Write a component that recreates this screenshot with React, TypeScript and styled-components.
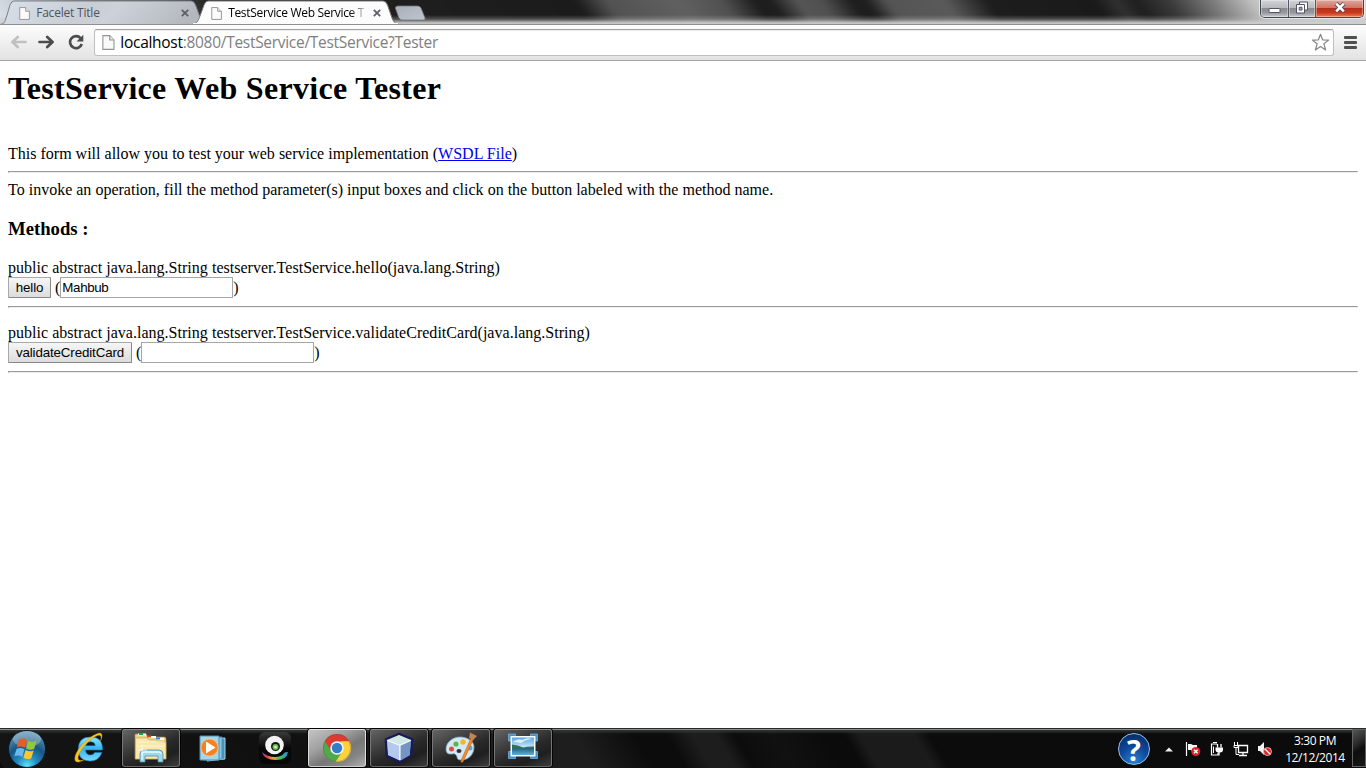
import React from "react";
import styled, { createGlobalStyle } from "styled-components";

const GlobalStyle = createGlobalStyle`
  * { box-sizing: border-box; }
  html, body { margin: 0; background: #fff; }
  body { width: 1366px; height: 768px; overflow: hidden; }
  svg { display: block; flex: none; }
`;

const uiFont = `"Open Sans", "Noto Sans", sans-serif`;

const Screen = styled.div`
  width: 1366px;
  height: 768px;
  display: flex;
  flex-direction: column;
  overflow: hidden;
`;

/* ---------- window frame ---------- */

const TitleBar = styled.header`
  position: relative;
  display: flex;
  align-items: flex-start;
  height: 24px;
  flex: none;
  overflow: hidden;
  background: #1c1c1c;
`;

const Glass = styled.div`
  position: absolute;
  inset: -20px -40px -20px -36px;
  transform: skewX(36deg);
  transform-origin: top left;
  filter: blur(3px);
  background: linear-gradient(
    90deg,
    #dfe7ef 0, #c3c9d0 40px, #777 100px, #555 180px, #222 230px,
    #1b1b1b 596px, #525252 628px, #606060 700px, #505050 742px, #1d1d1d 776px, #1f1f1f 792px,
    #555 818px, #505050 842px, #1e1e1e 872px, #1e1e1e 886px, #545454 908px, #5a5a5a 964px,
    #1d1d1d 1008px, #1a1a1a 1115px, #303030 1136px, #1f1f1f 1156px, #3a3a3a 1190px,
    #777 1230px, #c4c4c4 1275px, #dadada 1386px
  );
`;

const GlassEdge = styled.div`
  position: absolute;
  inset: 15px 0 0 0;
  background: linear-gradient(180deg, transparent 0, rgba(190, 190, 190, 0.3) 45%, rgba(205, 205, 205, 0.95) 88%);
`;

const TabStrip = styled.div`
  position: relative;
  width: 430px;
  height: 24px;
  flex: none;
`;

const TabShapes = styled.svg`
  position: absolute;
  left: 0;
  top: 0;
`;

const TabRow = styled.div`
  position: relative;
  display: flex;
  height: 24px;
  padding: 2px 0 0 19px;
`;

const Tab = styled.div<{ $active?: boolean }>`
  display: flex;
  align-items: center;
  width: ${(p) => (p.$active ? 173 : 192)}px;
  height: 22px;
  font: 12px/22px ${uiFont};
  color: ${(p) => (p.$active ? "#000" : "#50545a")};
`;

const TabTitle = styled.span<{ $spacing: number; $fade?: boolean }>`
  width: 137px;
  margin: 0 8px 0 6px;
  white-space: nowrap;
  letter-spacing: ${(p) => p.$spacing}px;
  ${(p) => p.$fade && "mask-image: linear-gradient(90deg, #000 122px, transparent 140px);"}
`;

const WindowButtons = styled.div`
  position: relative;
  display: flex;
  width: 104px;
  height: 18px;
  margin-left: auto;
  margin-right: 2px;
  border: 1px solid #41454c;
  border-top: 0;
  border-radius: 0 0 5px 5px;
  overflow: hidden;
  box-shadow: 0 0 0 1px rgba(255, 255, 255, 0.55);
`;

const WindowButton = styled.div<{ $width: number; $close?: boolean }>`
  display: flex;
  align-items: center;
  justify-content: center;
  width: ${(p) => p.$width}px;
  height: 17px;
  padding-bottom: 2px;
  border-right: ${(p) => (p.$close ? 0 : 1)}px solid #555962;
  box-shadow: inset 0 0 0 1px rgba(255, 255, 255, 0.35);
  background: ${(p) =>
    p.$close
      ? "linear-gradient(#dfa89e 0, #cf7566 45%, #b8301a 50%, #c93a1d 75%, #e98059 100%)"
      : "linear-gradient(#d3d4d6 0, #b9babd 45%, #898b90 50%, #97999e 75%, #cbccd0 100%)"};
`;

/* ---------- browser toolbar ---------- */

const Toolbar = styled.div`
  display: flex;
  align-items: center;
  height: 37px;
  flex: none;
  padding: 0 7px 0 9px;
  border-top: 1px solid #8e8e8e;
  border-bottom: 1px solid #a3a3a3;
  background: linear-gradient(#fdfdfd, #e2e2e2);
`;

const NavIcons = styled.div`
  display: flex;
  gap: 11px;
  width: 85px;
  padding-bottom: 1px;
`;

const AddressBar = styled.div`
  display: flex;
  align-items: center;
  width: 1240px;
  height: 27px;
  padding: 0 3px 0 7px;
  border: 1px solid #c0c0c0;
  border-top-color: #a0a0a0;
  border-radius: 3px;
  background: #fff;
  box-shadow: inset 0 1px 1px rgba(0, 0, 0, 0.08);
`;

const Url = styled.span`
  flex: 1;
  margin: -1px 0 0 5.5px;
  font: 15.5px/24px ${uiFont};
  letter-spacing: -0.29px;
  color: #808080;
  b { font-weight: 400; color: #000; }
`;

const MenuIcon = styled.div`
  display: flex;
  flex-direction: column;
  gap: 2px;
  margin-left: 10px;
  i { width: 13px; height: 3px; border-radius: 1px; background: #505050; }
`;

/* ---------- page ---------- */

const Page = styled.main`
  flex: 1;
  padding: 10px 8px 0;
  background: #fff;
  color: #000;
  font: 16px/18px "Liberation Serif", serif;
`;

const Heading = styled.h1`
  height: 74px;
  margin: 0;
  font-size: 32px;
  line-height: 34px;
  letter-spacing: 0.31px;
`;

const Line = styled.p`
  margin: 0;
  height: 18px;
  white-space: nowrap;
  letter-spacing: 0.006px;
  a { color: #0000ee; text-decoration: underline; }
`;

const Signature = styled(Line)`
  letter-spacing: 0.026px;
`;

const SubHeading = styled.h3`
  margin: 19px 0 20px;
  font-size: 18.72px;
  line-height: 21px;
`;

const Rule = styled.hr`
  height: 2px;
  margin: 8px 0;
  border: 1px solid;
  border-color: #9a9a9a #eee #eee #9a9a9a;
`;

const MethodRow = styled.div`
  display: flex;
  align-items: center;
  height: 21px;
  white-space: pre;
`;

const MethodButton = styled.button<{ $width: number }>`
  width: ${(p) => p.$width}px;
  height: 21px;
  margin: 0 4px 0 0;
  padding: 0;
  border: 1px solid #a9a9a9;
  border-right-color: #888;
  border-bottom-color: #888;
  border-radius: 1px;
  background: linear-gradient(#f6f6f6, #dcdcdc);
  color: #000;
  font: 13.33px/18px "Liberation Sans", sans-serif;
  letter-spacing: -0.12px;
`;

const MethodInput = styled.input`
  width: 173px;
  height: 21px;
  margin: 0;
  padding: 1px;
  border: 1px solid #a6a6a6;
  background: #fff;
  color: #000;
  font: 13.33px "Liberation Sans", sans-serif;
  letter-spacing: -0.35px;
`;

const Method = styled.section`
  & + & { margin-top: 16px; }
`;

/* ---------- taskbar ---------- */

const Taskbar = styled.footer`
  position: relative;
  display: flex;
  height: 40px;
  flex: none;
  overflow: hidden;
  background: #0c0c0c;
`;

const TaskbarSheen = styled.div`
  position: absolute;
  inset: 0 0 0 -20px;
  transform: skewX(31deg);
  transform-origin: top left;
  background: linear-gradient(
    90deg,
    #141414 0, #101010 300px, #1d1d1d 480px, #1e1e1e 590px, #0c0c0c 650px, #0c0c0c 682px,
    #1d1d1d 708px, #1d1d1d 732px, #0c0c0c 750px, #111 790px, #0b0b0b 840px, #0b0b0b 860px,
    #1b1b1b 875px, #1b1b1b 930px, #0c0c0c 945px, #0b0b0b 1386px
  );
`;

const TaskbarEdge = styled.div`
  position: absolute;
  inset: 0;
  border-top: 1px solid #252a2a;
  background: linear-gradient(#8b8d8d 0, #8b8d8d 1px, #353737 1px, rgba(30, 32, 32, 0) 5px);
`;

const TaskItems = styled.div`
  position: relative;
  display: flex;
  gap: 4px;
`;

const StartButton = styled.div`
  display: flex;
  align-items: center;
  justify-content: center;
  width: 56px;
  height: 40px;
  padding: 0 3px 1px 0;
`;

const TaskButton = styled.div<{ $state?: "open" | "active" }>`
  display: flex;
  align-items: center;
  justify-content: center;
  width: 58px;
  height: 38px;
  margin-top: 1px;
  border: 1px solid transparent;
  border-radius: 3px;
  ${(p) =>
    p.$state === "open" &&
    `border-color: #8a8a8a #777 #666; box-shadow: 0 0 0 1px #050505;
     background: linear-gradient(155deg, #646464 0, #454545 28%, #292929 55%, #1f1f1f 75%, #3e3e3e 100%);`}
  ${(p) =>
    p.$state === "active" &&
    `border-color: #e6e6e6 #ddd #ccc; box-shadow: 0 0 0 1px #050505;
     background: linear-gradient(150deg, #c4c4c4 0, #a0a0a0 35%, #777 58%, #858585 78%, #b0b0b0 100%);`}
`;

const Tray = styled.div`
  position: relative;
  display: flex;
  align-items: center;
  margin-left: auto;
  padding-top: 2px;
`;

const TrayArrow = styled.svg`
  margin: 0 12px 0 15px;
`;

const TrayIcons = styled.div`
  display: flex;
  align-items: center;
  gap: 8px;
`;

const Clock = styled.div`
  width: 62px;
  margin-left: 10px;
  text-align: center;
  white-space: nowrap;
  color: #fff;
  font: 12px/17px ${uiFont};
  letter-spacing: -0.4px;
`;

const ShowDesktop = styled.div`
  position: relative;
  width: 14px;
  height: 38px;
  margin: 1px 0 0 6px;
  border: 1px solid #636363;
  background: linear-gradient(145deg, #555 0, #2d2d2d 35%, #0d0d0d 55%, #181818 100%);
`;

/* ---------- drawings ---------- */

const PageIcon = ({ size = 14 }: { size?: number }) => (
  <svg width={(size * 12) / 14} height={size} viewBox="0 0 12 14">
    <path d="M.8.6h6.4l4 4v8.8H.8z" fill="#fafafa" stroke="#939393" />
    <path d="M7.2.6v4h4" fill="#e8e8e8" stroke="#939393" />
  </svg>
);

const CloseIcon = () => (
  <svg width="8" height="8" viewBox="0 0 8 8">
    <path d="M.8.8l6.4 6.4M7.2.8L.8 7.2" stroke="#5d5f63" strokeWidth="1.8" />
  </svg>
);

const Tabs = () => (
  <TabShapes width="430" height="24" viewBox="0 0 430 24">
    <defs>
      <linearGradient id="idle" x2="1" y2=".12">
        <stop offset="0" stopColor="#d9e0e8" />
        <stop offset=".45" stopColor="#c9ced6" />
        <stop offset=".6" stopColor="#cdd2da" />
        <stop offset="1" stopColor="#b4b8be" />
      </linearGradient>
      <linearGradient id="newTab" x2="1" y2="1">
        <stop offset="0" stopColor="#a8afb9" />
        <stop offset="1" stopColor="#bfc5ce" />
      </linearGradient>
    </defs>
    <path d="M0 24.500C5 24 5 21 7 15L10 5Q11.500 1 14 1H191Q194 1 195.500 5L201 20Q202 24 205 24.500Z" fill="url(#idle)" stroke="#7c8087" />
    <path d="M192 24.500C197 24 198 21 200 16L204 5Q205.500 1 208 1H383Q386 1 387.500 5L392 18Q394 24 399 24.500Z" fill="#fcfcfc" stroke="#777" />
    <path d="M193 24h205" stroke="#fcfcfc" strokeWidth="2" />
    <path d="M395.500 8.500Q395 6 398 6H417.500Q420 6 421 8L425 18Q425.500 20 423 20H402.500Q400 20 399 18Z" fill="url(#newTab)" stroke="#74777c" strokeWidth=".8" />
  </TabShapes>
);

const ArrowIcon = ({ forward }: { forward?: boolean }) => (
  <svg width="18" height="16" viewBox="0 0 18 16">
    <path
      d={forward ? "M1.500 8h13M9.200 3L14.600 8l-5.400 5" : "M16.500 8h-13M8.800 3L3.400 8l5.400 5"}
      fill="none"
      stroke={forward ? "#4c4c4c" : "#c0c0c0"}
      strokeWidth="2.7"
      strokeLinecap="round"
      strokeLinejoin="round"
    />
  </svg>
);

const ReloadIcon = () => (
  <svg width="18" height="16" viewBox="0 0 18 16">
    <path d="M13.600 4.200A6 6 0 1 0 14.800 10" fill="none" stroke="#4c4c4c" strokeWidth="2.600" />
    <path d="M16.300.800v6.700H9.600z" fill="#4c4c4c" />
  </svg>
);

const StarIcon = () => (
  <svg width="19" height="19" viewBox="0 0 19 19">
    <path d="M9.500 1.200l2.100 5.600 6 .3-4.700 3.700 1.700 6.200-5.100-3.500-5.100 3.500 1.700-6.200L1.400 7.100l6-.3z" fill="#fff" stroke="#858585" strokeWidth="1.200" strokeLinejoin="round" />
  </svg>
);

const StartIcon = () => (
  <svg width="40" height="40" viewBox="0 0 40 40">
    <defs>
      <radialGradient id="orb" cx=".5" cy=".95" r=".95">
        <stop offset="0" stopColor="#5fe4fb" />
        <stop offset=".28" stopColor="#238dc2" />
        <stop offset=".58" stopColor="#185584" />
        <stop offset="1" stopColor="#6d9db8" />
      </radialGradient>
    </defs>
    <circle cx="20" cy="21" r="18.500" fill="url(#orb)" stroke="#071a2b" />
    <ellipse cx="20" cy="11" rx="14" ry="8" fill="#d5e7ee" opacity=".32" />
    <path d="M12.200 11.500q4.500-2.200 7.800.500l-2.200 7.800q-3.700-2.500-7.900-.4z" fill="#ee5a24" />
    <path d="M21.200 12.800q3.800 2.200 8.400 0l-2.400 8q-4.100 1.900-8.100-.4z" fill="#93c83e" />
    <path d="M9.500 20.900q4.100-1.900 7.900.4l-2.200 7.700q-3.700-2.600-7.900-.4z" fill="#6fb6ea" />
    <path d="M18.600 22.100q3.900 2.200 8 .3L24.300 30.200q-4 2-7.900-.4z" fill="#fbc72e" />
  </svg>
);

const ExplorerEIcon = () => (
  <svg width="32" height="34" viewBox="0 0 32 34">
    <defs>
      <linearGradient id="ieBlue" x2="0" y2="1">
        <stop offset="0" stopColor="#8ee5ff" />
        <stop offset=".5" stopColor="#36b3ee" />
        <stop offset="1" stopColor="#79dafc" />
      </linearGradient>
    </defs>
    <path d="M29.500 19H12.500q.3 5 5 5 3 0 4.200-2.500h7.200Q26 30 17.300 30 5.300 30 5.300 18.300 5.300 6 17.500 6q12.500 0 12 13zM12.700 14.700h9.600q-.4-4-4.700-4-4.200 0-4.900 4z" fill="url(#ieBlue)" stroke="#167fbd" strokeWidth=".6" />
    <path d="M27.500 10c3-6 1.500-9.500-3.500-7.300C15 6 3.500 18 2 26c-1.200 6.300 4 6.300 9.500 2.600-4.700 1.800-7.500.7-6-4C8 17 18 6.800 24.500 4.600c3.700-1.200 4.200 1.400 3 5.400z" fill="#fbc624" stroke="#c98b0e" strokeWidth=".4" />
  </svg>
);

const FolderIcon = () => (
  <svg width="34" height="32" viewBox="0 0 34 32">
    <path d="M1 3q0-1 1-1h10l2 3h16q2 0 2 2v20H1z" fill="#e9d18a" stroke="#b69543" strokeWidth=".6" />
    <path d="M4 2.500h8M14 5h8M22 7h8" stroke="#fff" strokeWidth="2" />
    <path d="M5 2h4" stroke="#18a64b" strokeWidth="2" />
    <path d="M13 4.500h4" stroke="#d3482a" strokeWidth="2" />
    <path d="M22 6.500h4" stroke="#288ad7" strokeWidth="2" />
    <path d="M1.500 6h11l3 2h6l2 2H32v17H1.500z" fill="#fae7aa" stroke="#c4a654" strokeWidth=".6" />
    <path d="M4 10h26M3 14h28" stroke="#fff5ce" />
    <path d="M6 30v-8q0-4 4-4h15q4 0 4 4v8h-5v-6H11v6z" fill="#9ed9ec" stroke="#528da9" strokeWidth=".8" />
    <path d="M8 28v-6q0-2 3-2h13q3 0 3 2" fill="none" stroke="#e4fbff" strokeWidth="1.300" />
    <path d="M8 13v10M4 18h9" stroke="#fff" strokeWidth=".8" />
  </svg>
);

const MediaIcon = () => (
  <svg width="28" height="28" viewBox="0 0 28 28">
    <path d="M8 5l18-1v21L8 27z" fill="#4b91b5" stroke="#a3d8ed" />
    <path d="M4 4l19-1v22L4 26z" fill="#8ac6df" stroke="#4f91b2" />
    <path d="M1 2h19v24H1z" fill="#a7d6e9" stroke="#4b91b5" />
    <circle cx="10.500" cy="13.500" r="8.600" fill="#f58220" stroke="#ffc28d" strokeWidth=".8" />
    <path d="M7 7.500l9.500 6-9.500 6z" fill="#fff" />
  </svg>
);

const WebcamIcon = () => (
  <svg width="34" height="34" viewBox="0 0 34 34">
    <defs>
      <linearGradient id="spectrum">
        <stop offset="0" stopColor="#7a42d8" />
        <stop offset=".2" stopColor="#e34034" />
        <stop offset=".42" stopColor="#f8a136" />
        <stop offset=".65" stopColor="#44c252" />
        <stop offset="1" stopColor="#278de0" />
      </linearGradient>
      <linearGradient id="camBox" x2="0" y2="1">
        <stop offset="0" stopColor="#393939" />
        <stop offset=".5" stopColor="#070707" />
      </linearGradient>
    </defs>
    <rect x="1" y="1" width="32" height="32" rx="6" fill="url(#camBox)" />
    <path d="M4 21q7 6 15 4 6-4 11-4-1 8-12 8Q6 29 4 21z" fill="url(#spectrum)" />
    <ellipse cx="17" cy="20" rx="10" ry="6" fill="#050505" />
    <circle cx="16.500" cy="14" r="9.300" fill="#f2f2f2" />
    <circle cx="17.500" cy="15.500" r="4.500" fill="#151515" />
    <circle cx="17.500" cy="16" r="3" fill="#68bd46" />
    <circle cx="17.500" cy="16" r="1.300" fill="#d9ffd0" />
  </svg>
);

const ChromeIcon = () => (
  <svg width="30" height="30" viewBox="0 0 30 30">
    <circle cx="15" cy="15" r="14" fill="#4eaa4b" />
    <path d="M2.900 8A14 14 0 0 1 27.300 8.300H15l-6 9.500z" fill="#df3a31" />
    <path d="M27.300 8.300A14 14 0 0 1 13.500 29l7.500-11.500L18.500 8.300z" fill="#fed13d" />
    <circle cx="15" cy="15" r="6.800" fill="#f5f5f5" />
    <circle cx="15" cy="15" r="5.200" fill="#337ecb" />
    <circle cx="15" cy="15" r="13.600" fill="none" stroke="#6b5030" strokeOpacity=".45" strokeWidth=".7" />
  </svg>
);

const CubeIcon = () => (
  <svg width="34" height="34" viewBox="0 0 34 34">
    <path d="M17 3L30 8.500l-1 16L18 31 5 25 4 8.500z" fill="#b9cbe7" stroke="#171c58" strokeWidth="2.600" strokeLinejoin="round" />
    <path d="M5 9l12-5 12 5-11 5z" fill="#d3e7e3" />
    <path d="M5 9.500l12.500 5L18 29.500 6 24z" fill="#b5c9ec" />
    <path d="M18.500 14.500L29 9.500l-1.300 14.800-9.200 5.200z" fill="#7494c3" />
    <path d="M5 9.300l12.800 5L29 9.300M17.800 14.300V29" fill="none" stroke="#f5f9ff" strokeWidth="1.200" />
  </svg>
);

const PaintIcon = () => (
  <svg width="36" height="34" viewBox="0 0 36 34">
    <path d="M17 6C9 6 3 12 3 18q0 5 4 5c4 0 4-1 6 1s0 5 5 5c8 0 13-6 13-13C31 10 24 6 17 6z" fill="#d6e8f4" stroke="#7eabc9" strokeWidth=".8" />
    <ellipse cx="16" cy="20" rx="2.500" ry="2" fill="#27313a" />
    <circle cx="8.500" cy="18" r="2.500" fill="#df4c3e" />
    <circle cx="13" cy="13" r="2.600" fill="#55b848" />
    <circle cx="20" cy="11" r="2.700" fill="#f5b62f" />
    <circle cx="27" cy="17" r="2.500" fill="#56a9e3" />
    <path d="M28 7l2.500 1L20 31l-2 .5.200-2.500z" fill="#f18b27" stroke="#b05a14" strokeWidth=".5" />
    <path d="M27 1.500L34 5l-4 4-4-2z" fill="#bd8655" />
  </svg>
);

const PhotoIcon = () => (
  <svg width="32" height="32" viewBox="0 0 32 32">
    <defs>
      <linearGradient id="sky" x2="0" y2="1">
        <stop offset="0" stopColor="#5ba5e2" />
        <stop offset="1" stopColor="#d8f0fb" />
      </linearGradient>
      <linearGradient id="lake" x2="0" y2="1">
        <stop offset="0" stopColor="#21628a" />
        <stop offset="1" stopColor="#63b0d6" />
      </linearGradient>
    </defs>
    <path d="M1.500 2h7v7h-7zM23.500 2h7v7h-7zM1.500 19.500h7v7h-7zM23.500 19.500h7v7h-7z" fill="#438fc9" stroke="#7ebae5" strokeWidth=".7" />
    <path d="M3.500 4h25v20.500h-25z" fill="#f5fbff" />
    <path d="M5 5.500h22v11H5z" fill="url(#sky)" />
    <path d="M6 10q5-4 9-2 5-3 10-1-8 1-11 4-4-1-8-1z" fill="#f3fbff" opacity=".8" />
    <path d="M5 12.500q6 .5 11 3 6-1.500 11-1v3H5z" fill="#2f7258" />
    <path d="M5 16.500h22V23H5z" fill="url(#lake)" />
  </svg>
);

const HelpBadge = styled.div`
  display: flex;
  align-items: center;
  justify-content: center;
  width: 32px;
  height: 32px;
  border: 1px solid #8ec4ed;
  border-radius: 50%;
  background: radial-gradient(circle at 50% 90%, #2882d4 0, #10499b 45%, #06245f 100%);
  color: #fff;
  font: 700 29px/29px ${uiFont};
`;

const FlagIcon = () => (
  <svg width="16" height="16" viewBox="0 0 16 16">
    <path d="M1.500 1v14" stroke="#fff" strokeWidth="1.200" />
    <path d="M3 3h3l2 1h4v6H7L6 9H3z" fill="#f5f5f5" />
    <circle cx="10.800" cy="10.500" r="4.500" fill="#d8252c" />
    <path d="M9 8.700l3.600 3.600M12.600 8.700L9 12.300" stroke="#fff" strokeWidth="1.400" />
  </svg>
);

const PowerIcon = () => (
  <svg width="16" height="16" viewBox="0 0 16 16">
    <path d="M4 1.500h4M8 3H2.500v11H9v-2" fill="none" stroke="#fff" strokeWidth="1.200" />
    <path d="M4.500 5.500v6.500" stroke="#fff" />
    <path d="M6.500 6.500h7.500v2q0 3-3 3H9.500q-3 0-3-3z" fill="#fff" />
    <path d="M8.500 6.500V3M12 6.500V3M10 11v3.500" stroke="#fff" strokeWidth="1.300" />
  </svg>
);

const NetworkIcon = () => (
  <svg width="16" height="16" viewBox="0 0 16 16">
    <path d="M5.500 4.500h9v7h-9zM10 12v2M6 14.500h8" fill="none" stroke="#fff" strokeWidth="1.300" />
    <path d="M1.500 1v3M4.500 1v3M1 4.500h4v2H1zM3 6v7.500h3" fill="none" stroke="#fff" />
  </svg>
);

const MutedIcon = () => (
  <svg width="17" height="16" viewBox="0 0 17 16">
    <path d="M1 5h2l4-4v13l-4-4H1z" fill="#f3f3f3" />
    <circle cx="10.500" cy="10.500" r="4" fill="#d8252c" stroke="#f6b3b3" strokeWidth=".9" />
    <path d="M8 8l5 5" stroke="#fff" strokeWidth="1.300" />
  </svg>
);

/* ---------- app ---------- */

export default function App() {
  return (
    <Screen>
      <GlobalStyle />
      <TitleBar>
        <Glass />
        <GlassEdge />
        <TabStrip>
          <Tabs />
          <TabRow>
            <Tab>
              <PageIcon size={13} />
              <TabTitle $spacing={-0.2}>Facelet Title</TabTitle>
              <CloseIcon />
            </Tab>
            <Tab $active>
              <PageIcon size={13} />
              <TabTitle $spacing={-0.32} $fade>TestService Web Service T</TabTitle>
              <CloseIcon />
            </Tab>
          </TabRow>
        </TabStrip>
        <WindowButtons>
          <WindowButton $width={28}>
            <svg width="13" height="14"><rect x="1" y="7.500" width="11" height="4" rx=".5" fill="#fff" stroke="#50536a" /></svg>
          </WindowButton>
          <WindowButton $width={27}>
            <svg width="12" height="13" viewBox="0 0 12 13">
              <path d="M3.500 1h8v8h-8z" fill="#fff" stroke="#50536a" />
              <path d="M.5 3.500h8v8.500h-8z" fill="#fff" stroke="#50536a" />
              <path d="M3.200 6.300h2.800v2.800H3.200z" fill="#aaa" stroke="#50536a" />
            </svg>
          </WindowButton>
          <WindowButton $width={47} $close>
            <svg width="12" height="11" viewBox="0 0 12 11">
              <path d="M2 1.500l8 8M10 1.500l-8 8" stroke="#50475c" strokeWidth="4.200" />
              <path d="M2.200 1.700l7.600 7.600M9.800 1.700L2.200 9.300" stroke="#fff" strokeWidth="2.600" />
            </svg>
          </WindowButton>
        </WindowButtons>
      </TitleBar>

      <Toolbar>
        <NavIcons>
          <ArrowIcon />
          <ArrowIcon forward />
          <ReloadIcon />
        </NavIcons>
        <AddressBar>
          <PageIcon size={15} />
          <Url><b>localhost</b>:8080/TestService/TestService?Tester</Url>
          <StarIcon />
        </AddressBar>
        <MenuIcon><i /><i /><i /></MenuIcon>
      </Toolbar>

      <Page>
        <Heading>TestService Web Service Tester</Heading>
        <Line>This form will allow you to test your web service implementation (<a>WSDL File</a>)</Line>
        <Rule />
        <Line>To invoke an operation, fill the method parameter(s) input boxes and click on the button labeled with the method name.</Line>
        <SubHeading>Methods :</SubHeading>
        <Method>
          <Signature>public abstract java.lang.String testserver.TestService.hello(java.lang.String)</Signature>
          <MethodRow>
            <MethodButton $width={43}>hello</MethodButton>(<MethodInput defaultValue="Mahbub" />)
          </MethodRow>
          <Rule />
        </Method>
        <Method>
          <Signature>public abstract java.lang.String testserver.TestService.validateCreditCard(java.lang.String)</Signature>
          <MethodRow>
            <MethodButton $width={124}>validateCreditCard</MethodButton>(<MethodInput />)
          </MethodRow>
          <Rule />
        </Method>
      </Page>

      <Taskbar>
        <TaskbarSheen />
        <TaskbarEdge />
        <TaskItems>
          <StartButton><StartIcon /></StartButton>
          <TaskButton><ExplorerEIcon /></TaskButton>
          <TaskButton $state="open"><FolderIcon /></TaskButton>
          <TaskButton><MediaIcon /></TaskButton>
          <TaskButton><WebcamIcon /></TaskButton>
          <TaskButton $state="active"><ChromeIcon /></TaskButton>
          <TaskButton $state="open"><CubeIcon /></TaskButton>
          <TaskButton $state="open"><PaintIcon /></TaskButton>
          <TaskButton $state="open"><PhotoIcon /></TaskButton>
        </TaskItems>
        <Tray>
          <HelpBadge>?</HelpBadge>
          <TrayArrow width="8" height="5"><path d="M0 4.500L4 .500l4 4z" fill="#eee" /></TrayArrow>
          <TrayIcons>
            <FlagIcon />
            <PowerIcon />
            <NetworkIcon />
            <MutedIcon />
          </TrayIcons>
          <Clock>3:30 PM<br />12/12/2014</Clock>
        </Tray>
        <ShowDesktop />
      </Taskbar>
    </Screen>
  );
}
